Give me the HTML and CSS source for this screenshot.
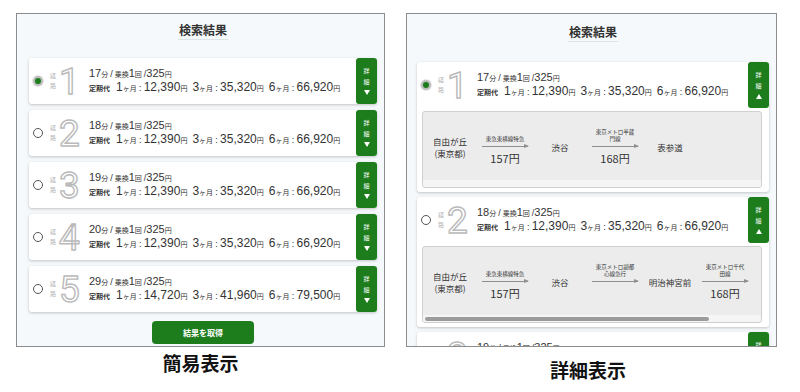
FILE: index.html
```html
<!DOCTYPE html>
<html lang="ja">
<head>
    <meta charset="UTF-8">
    <meta name="viewport" content="width=device-width, initial-scale=1.0">
    <title>検索結果</title>
    <link rel="stylesheet" href="styles.css">
</head>
<body>

    <div class="views">

        <!-- simple view -->
        <div class="view view-simple">
            <div class="panel">
                <h2 class="panel-title"><span>検索結果</span></h2>

                <div class="route">
                    <div class="route-head">
                        <span class="radio checked"></span>
                        <span class="route-label">経<br>路</span>
                        <span class="route-num">1</span>
                        <div class="route-info">
                            <div class="line1"><b>17</b>分 <i>/</i> 乗換<b>1</b>回 <i>/</i><b>325</b>円</div>
                            <div class="line2"><span class="teiki">定期代</span><span class="fare"><b>1</b>ヶ月：<b>12,390</b>円</span><span class="fare"><b>3</b>ヶ月：<b>35,320</b>円</span><span class="fare"><b>6</b>ヶ月：<b>66,920</b>円</span></div>
                        </div>
                        <div class="detail-btn">詳<br>細<span class="tri down"></span></div>
                    </div>
                </div>

                <div class="route">
                    <div class="route-head">
                        <span class="radio"></span>
                        <span class="route-label">経<br>路</span>
                        <span class="route-num">2</span>
                        <div class="route-info">
                            <div class="line1"><b>18</b>分 <i>/</i> 乗換<b>1</b>回 <i>/</i><b>325</b>円</div>
                            <div class="line2"><span class="teiki">定期代</span><span class="fare"><b>1</b>ヶ月：<b>12,390</b>円</span><span class="fare"><b>3</b>ヶ月：<b>35,320</b>円</span><span class="fare"><b>6</b>ヶ月：<b>66,920</b>円</span></div>
                        </div>
                        <div class="detail-btn">詳<br>細<span class="tri down"></span></div>
                    </div>
                </div>

                <div class="route">
                    <div class="route-head">
                        <span class="radio"></span>
                        <span class="route-label">経<br>路</span>
                        <span class="route-num">3</span>
                        <div class="route-info">
                            <div class="line1"><b>19</b>分 <i>/</i> 乗換<b>1</b>回 <i>/</i><b>325</b>円</div>
                            <div class="line2"><span class="teiki">定期代</span><span class="fare"><b>1</b>ヶ月：<b>12,390</b>円</span><span class="fare"><b>3</b>ヶ月：<b>35,320</b>円</span><span class="fare"><b>6</b>ヶ月：<b>66,920</b>円</span></div>
                        </div>
                        <div class="detail-btn">詳<br>細<span class="tri down"></span></div>
                    </div>
                </div>

                <div class="route">
                    <div class="route-head">
                        <span class="radio"></span>
                        <span class="route-label">経<br>路</span>
                        <span class="route-num">4</span>
                        <div class="route-info">
                            <div class="line1"><b>20</b>分 <i>/</i> 乗換<b>1</b>回 <i>/</i><b>325</b>円</div>
                            <div class="line2"><span class="teiki">定期代</span><span class="fare"><b>1</b>ヶ月：<b>12,390</b>円</span><span class="fare"><b>3</b>ヶ月：<b>35,320</b>円</span><span class="fare"><b>6</b>ヶ月：<b>66,920</b>円</span></div>
                        </div>
                        <div class="detail-btn">詳<br>細<span class="tri down"></span></div>
                    </div>
                </div>

                <div class="route">
                    <div class="route-head">
                        <span class="radio"></span>
                        <span class="route-label">経<br>路</span>
                        <span class="route-num">5</span>
                        <div class="route-info">
                            <div class="line1"><b>29</b>分 <i>/</i> 乗換<b>1</b>回 <i>/</i><b>325</b>円</div>
                            <div class="line2"><span class="teiki">定期代</span><span class="fare"><b>1</b>ヶ月：<b>14,720</b>円</span><span class="fare"><b>3</b>ヶ月：<b>41,960</b>円</span><span class="fare"><b>6</b>ヶ月：<b>79,500</b>円</span></div>
                        </div>
                        <div class="detail-btn">詳<br>細<span class="tri down"></span></div>
                    </div>
                </div>

                <div class="fetch">
                    <button class="fetch-btn">結果を取得</button>
                </div>
            </div>
            <p class="caption">簡易表示</p>
        </div>

        <!-- detail view -->
        <div class="view view-detail">
            <div class="panel panel-detail">
                <h2 class="panel-title"><span>検索結果</span></h2>

                <div class="route open">
                    <div class="route-head">
                        <span class="radio checked"></span>
                        <span class="route-label">経<br>路</span>
                        <span class="route-num">1</span>
                        <div class="route-info">
                            <div class="line1"><b>17</b>分 <i>/</i> 乗換<b>1</b>回 <i>/</i><b>325</b>円</div>
                            <div class="line2"><span class="teiki">定期代</span><span class="fare"><b>1</b>ヶ月：<b>12,390</b>円</span><span class="fare"><b>3</b>ヶ月：<b>35,320</b>円</span><span class="fare"><b>6</b>ヶ月：<b>66,920</b>円</span></div>
                        </div>
                        <div class="detail-btn">詳<br>細<span class="tri up"></span></div>
                    </div>
                    <div class="detail">
                        <div class="stops">
                            <div class="stop">自由が丘<br>(東京都)</div>
                            <div class="seg">
                                <div class="seg-line">東急東横線特急</div>
                                <div class="arrow"></div>
                                <div class="seg-price">157円</div>
                            </div>
                            <div class="stop">渋谷</div>
                            <div class="seg">
                                <div class="seg-line">東京メトロ半蔵<br>門線</div>
                                <div class="arrow"></div>
                                <div class="seg-price">168円</div>
                            </div>
                            <div class="stop">表参道</div>
                        </div>
                        <div class="scroll-track"></div>
                    </div>
                </div>

                <div class="route open">
                    <div class="route-head">
                        <span class="radio"></span>
                        <span class="route-label">経<br>路</span>
                        <span class="route-num">2</span>
                        <div class="route-info">
                            <div class="line1"><b>18</b>分 <i>/</i> 乗換<b>1</b>回 <i>/</i><b>325</b>円</div>
                            <div class="line2"><span class="teiki">定期代</span><span class="fare"><b>1</b>ヶ月：<b>12,390</b>円</span><span class="fare"><b>3</b>ヶ月：<b>35,320</b>円</span><span class="fare"><b>6</b>ヶ月：<b>66,920</b>円</span></div>
                        </div>
                        <div class="detail-btn">詳<br>細<span class="tri up"></span></div>
                    </div>
                    <div class="detail">
                        <div class="stops">
                            <div class="stop">自由が丘<br>(東京都)</div>
                            <div class="seg">
                                <div class="seg-line">東急東横線特急</div>
                                <div class="arrow"></div>
                                <div class="seg-price">157円</div>
                            </div>
                            <div class="stop">渋谷</div>
                            <div class="seg">
                                <div class="seg-line">東京メトロ副都<br>心線急行</div>
                                <div class="arrow"></div>
                                <div class="seg-price"></div>
                            </div>
                            <div class="stop">明治神宮前</div>
                            <div class="seg">
                                <div class="seg-line">東京メトロ千代<br>田線</div>
                                <div class="arrow"></div>
                                <div class="seg-price">168円</div>
                            </div>
                        </div>
                        <div class="scroll-track"><div class="scroll-thumb" style="width: 85%"></div></div>
                    </div>
                </div>

                <div class="route">
                    <div class="route-head">
                        <span class="radio"></span>
                        <span class="route-label">経<br>路</span>
                        <span class="route-num">3</span>
                        <div class="route-info">
                            <div class="line1"><b>19</b>分 <i>/</i> 乗換<b>1</b>回 <i>/</i><b>325</b>円</div>
                        </div>
                        <div class="detail-btn">詳<br>細<span class="tri down"></span></div>
                    </div>
                </div>
            </div>
            <p class="caption caption-detail">詳細表示</p>
        </div>

    </div>

</body>
</html>
```

FILE: styles.css
```css
body {
    margin: 0;
    background: #fff;
    color: #333;
    font-family: "Liberation Sans", "Noto Sans CJK JP", sans-serif;
}

.views {
    display: flex;
    align-items: flex-start;
    padding-top: 13px;
}

.view-simple {
    width: 369px;
    margin-left: 16px;
}

.view-detail {
    width: 371px;
    margin-left: 21px;
}

.panel {
    box-sizing: border-box;
    height: 334px;
    border: 1px solid #8c8c8c;
    background: #f6f9fb;
    padding: 0 7px 0 12px;
    overflow: hidden;
}

.panel-detail {
    padding-left: 10px;
}

.panel-title {
    margin: 8px 0 18px;
    text-align: center;
    font-size: 12px;
    line-height: 16px;
    font-weight: 700;
    color: #333;
    font-family: "Noto Sans CJK JP", sans-serif;
}

.panel-title span {
    display: inline-block;
    padding: 0 1px 1px;
    border-bottom: 1px solid #dde3e6;
}

.panel-detail .panel-title {
    margin: 10px 0 20px;
}

/* route card */

.route {
    background: #fff;
    border-radius: 3px;
    box-shadow: 0 1px 3px rgba(0, 0, 0, 0.22);
    margin-bottom: 6px;
}

.panel-detail .route {
    margin-bottom: 5px;
}

.route.open {
    padding-bottom: 4px;
}

.route-head {
    display: flex;
    align-items: center;
    height: 46px;
    padding-left: 4px;
}

.radio {
    box-sizing: border-box;
    width: 10px;
    height: 10px;
    border-radius: 50%;
    border: 1px solid #555;
    background: #fff;
    flex-shrink: 0;
}

.radio.checked {
    border: 2px solid #bcbcbc;
    background: #1d7d1d;
    box-shadow: 0 0 0 1px #e6e6e6;
}

.route-label {
    margin-left: 7px;
    width: 6px;
    font-size: 6px;
    line-height: 10px;
    color: #b5b5b5;
    font-family: "Noto Sans CJK JP", sans-serif;
}

.route-num {
    margin-left: 3px;
    width: 20px;
    font-family: Roboto, sans-serif;
    font-size: 37px;
    line-height: 1;
    color: #fff;
    -webkit-text-stroke: 1.4px #bababa;
    text-align: center;
}

.route-info {
    flex: 1;
    align-self: stretch;
    margin-left: 10px;
    padding-top: 8px;
}

.line1,
.line2 {
    height: 14px;
    line-height: 14px;
    white-space: nowrap;
    font-size: 7px;
    color: #333;
}

.line1 b {
    font-size: 11px;
    font-weight: 400;
}

.line1 i {
    font-style: normal;
    font-size: 9px;
}

.line2 b {
    font-size: 12px;
    font-weight: 400;
}

.teiki {
    font-weight: 700;
    margin-right: 6px;
}

.fare {
    margin-right: 5px;
}

.detail-btn {
    align-self: stretch;
    width: 21px;
    margin-left: auto;
    border-radius: 3px;
    background: #1d7d1d;
    color: #fff;
    font-size: 6px;
    line-height: 11px;
    text-align: center;
    padding-top: 7px;
    box-sizing: border-box;
    font-family: "Noto Sans CJK JP", sans-serif;
}

.tri {
    display: block;
    width: 0;
    height: 0;
    margin: 3px auto 0;
    border-left: 3.5px solid transparent;
    border-right: 3.5px solid transparent;
}

.tri.down {
    border-top: 5px solid #fff;
}

.tri.up {
    border-bottom: 5px solid #fff;
}

/* detail box */

.detail {
    margin: 3px 7px 0 5px;
    border: 1px solid #cfcfcf;
    border-radius: 3px;
    background: #ececec;
    overflow: hidden;
}

.stops {
    display: flex;
    align-items: center;
    width: max-content;
    padding: 17px 14px 15px 2px;
    font-family: "Noto Sans CJK JP", sans-serif;
}

.stop {
    width: 50px;
    text-align: center;
    font-size: 8.5px;
    line-height: 12px;
    color: #333;
}

.seg {
    width: 60px;
    display: flex;
    flex-direction: column;
    align-items: center;
}

.seg-line {
    height: 14px;
    display: flex;
    align-items: flex-end;
    justify-content: center;
    text-align: center;
    font-size: 5.5px;
    line-height: 7px;
    color: #333;
}

.arrow {
    position: relative;
    width: 46px;
    height: 1px;
    margin: 3px 0 4px;
    background: #8f8f8f;
}

.arrow::after {
    content: "";
    position: absolute;
    right: -1px;
    top: -2px;
    border-top: 2.5px solid transparent;
    border-bottom: 2.5px solid transparent;
    border-left: 5px solid #8f8f8f;
}

.seg-price {
    height: 14px;
    font-size: 11px;
    line-height: 14px;
    color: #333;
}

.scroll-track {
    height: 7px;
    padding: 1.5px 2px;
    box-sizing: border-box;
    background: #f5f5f5;
}

.scroll-thumb {
    height: 4px;
    border-radius: 2px;
    background: #9b9b9b;
}

/* fetch button */

.fetch {
    text-align: center;
    margin-top: 9px;
}

.fetch-btn {
    width: 102px;
    height: 23px;
    border: 0;
    border-radius: 4px;
    background: #1d7d1d;
    color: #fff;
    font-size: 8px;
    font-weight: 700;
    font-family: "Noto Sans CJK JP", sans-serif;
}

.caption {
    margin: 4px 0 0;
    text-align: center;
    font-size: 19px;
    line-height: 24px;
    font-weight: 700;
    color: #111;
    font-family: "Noto Sans CJK JP", sans-serif;
}

.caption-detail {
    margin-top: 11px;
    padding-right: 7px;
}
```
